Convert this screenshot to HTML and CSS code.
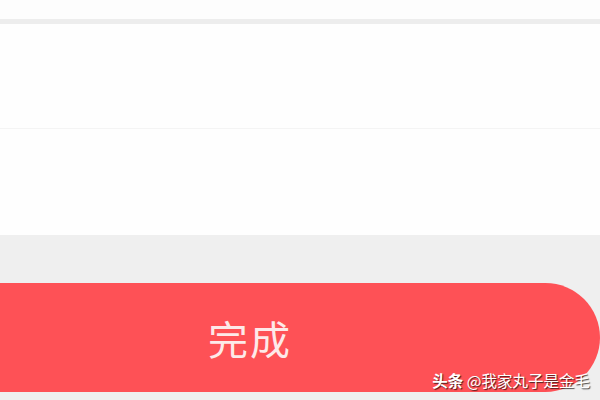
FILE: index.html
```html
<!DOCTYPE html>
<html lang="zh">
<head>
<meta charset="utf-8">
<link rel="stylesheet" href="styles.css">
</head>
<body>
<div class="page">
  <div class="top"></div>
  <div class="panel">
    <div class="row"></div>
    <div class="row last"></div>
  </div>
  <div class="actions">
    <button class="done">完成</button>
  </div>
  <div class="watermark"><b>头条</b> @我家丸子是金毛</div>
</div>
</body>
</html>
```
FILE: styles.css
```css
html, body {
  margin: 0;
  padding: 0;
}
body {
  background: #efefef;
  font-family: "Noto Sans CJK SC", "Noto Sans", sans-serif;
}
.page {
  position: relative;
  width: 600px;
  height: 400px;
  overflow: hidden;
  background: #efefef;
}
.top {
  height: 19px;
  background: #fdfdfd;
  border-bottom: 5px solid #ededed;
}
.panel {
  background: #fefefe;
}
.row {
  height: 104px;
  border-bottom: 1px solid #f4f4f4;
}
.row.last {
  height: 106px;
  border-bottom: none;
}
.actions {
  padding-top: 48px;
  display: flex;
}
.done {
  margin-left: -102px;
  width: 702px;
  height: 109px;
  flex: none;
  border: none;
  border-radius: 55px;
  background: #fe5156;
  color: #fde9e9;
  font-family: "Noto Sans CJK SC", "Noto Sans", sans-serif;
  font-size: 40px;
  letter-spacing: 2px;
  padding: 0 0 0 2px;
}
.watermark {
  position: absolute;
  right: 10px;
  top: 369px;
  color: #ffffff;
  font-size: 15.5px;
  line-height: 22px;
  text-shadow: 1px 1px 1px rgba(0,0,0,0.7);
  white-space: nowrap;
}
.watermark b {
  font-weight: 700;
}
```
